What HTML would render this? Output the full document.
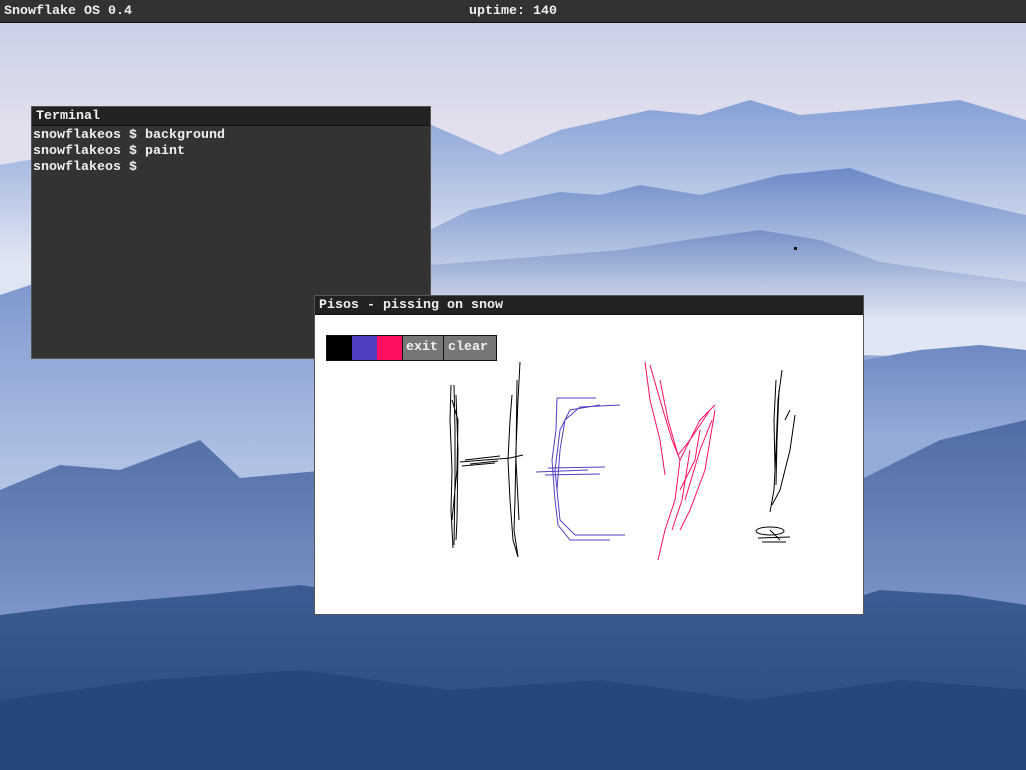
<!DOCTYPE html>
<html><head><meta charset="utf-8"><style>
html,body{margin:0;padding:0;width:1026px;height:770px;overflow:hidden;background:#cdd3e6}
*{box-sizing:border-box}
.mono{font-family:"Liberation Mono","DejaVu Sans Mono",monospace;font-size:13.33px;color:#f0f0f0;white-space:pre;font-weight:bold}
#bg{position:absolute;left:0;top:0}
#bar{position:absolute;left:0;top:0;width:1026px;height:23px;background:#323232;border-bottom:1px solid #111}
#bar .l{position:absolute;left:4px;top:4px}
#bar .c{position:absolute;left:469px;top:4px}
.win{position:absolute;border:1px solid #555}
.title{position:absolute;left:0;top:0;right:0;height:19px;background:#222;border-bottom:1px solid #111}
.title span{position:absolute;left:4px;top:2px}
</style></head><body>
<svg id="bg" width="1026" height="770" viewBox="0 0 1026 770">
<defs>
<linearGradient id="sky" gradientUnits="userSpaceOnUse" x1="0" y1="20" x2="0" y2="300"><stop offset="0" stop-color="#c9d0e6"/><stop offset="0.4" stop-color="#e2e0ee"/><stop offset="1" stop-color="#dfe3f1"/></linearGradient>
<linearGradient id="m1" gradientUnits="userSpaceOnUse" x1="0" y1="100" x2="0" y2="260"><stop offset="0" stop-color="#86a0d6"/><stop offset="1" stop-color="#e0e5f3"/></linearGradient>
<linearGradient id="m2" gradientUnits="userSpaceOnUse" x1="0" y1="170" x2="0" y2="300"><stop offset="0" stop-color="#6f8cc8"/><stop offset="1" stop-color="#dce3f2"/></linearGradient>
<linearGradient id="m2b" gradientUnits="userSpaceOnUse" x1="0" y1="230" x2="0" y2="320"><stop offset="0" stop-color="#7890c8"/><stop offset="1" stop-color="#e0e6f3"/></linearGradient>
<linearGradient id="m3" gradientUnits="userSpaceOnUse" x1="0" y1="285" x2="0" y2="480"><stop offset="0" stop-color="#8098ce"/><stop offset="1" stop-color="#b4c4e6"/></linearGradient>
<linearGradient id="m3r" gradientUnits="userSpaceOnUse" x1="0" y1="345" x2="0" y2="440"><stop offset="0" stop-color="#7088c2"/><stop offset="1" stop-color="#96acd8"/></linearGradient>
<linearGradient id="m4" gradientUnits="userSpaceOnUse" x1="0" y1="420" x2="0" y2="620"><stop offset="0" stop-color="#4f6ca4"/><stop offset="1" stop-color="#7e96c8"/></linearGradient>
<linearGradient id="m5" gradientUnits="userSpaceOnUse" x1="0" y1="590" x2="0" y2="770"><stop offset="0" stop-color="#3a5c92"/><stop offset="1" stop-color="#284878"/></linearGradient>
</defs>
<rect width="1026" height="770" fill="url(#sky)"/>
<path d="M0 165 L40 158 L120 150 L300 140 L420 120 L500 155 L560 130 L650 110 L700 115 L750 100 L800 115 L860 110 L960 100 L1026 120 L1026 770 L0 770Z" fill="url(#m1)"/>
<path d="M430 230 L470 210 L560 192 L600 195 L640 185 L700 195 L740 185 L780 175 L850 168 L900 185 L960 200 L1026 215 L1026 770 L430 770Z" fill="url(#m2)"/>
<path d="M430 265 L520 258 L620 250 L700 238 L760 230 L820 240 L880 262 L950 272 L1026 282 L1026 770 L430 770Z" fill="url(#m2b)"/>
<path d="M0 295 L30 285 L80 292 L150 300 L250 310 L350 330 L500 345 L700 350 L860 355 L1026 360 L1026 770 L0 770Z" fill="url(#m3)"/>
<path d="M864 360 L920 350 L980 345 L1026 350 L1026 770 L864 770Z" fill="url(#m3r)"/>
<path d="M0 490 L60 465 L120 470 L200 440 L240 478 L330 470 L420 470 L520 480 L700 490 L860 480 L940 440 L1026 420 L1026 770 L0 770Z" fill="url(#m4)"/>
<path d="M0 615 L80 605 L200 595 L300 585 L400 600 L500 610 L600 615 L700 605 L800 615 L880 590 L960 595 L1026 605 L1026 770 L0 770Z" fill="url(#m5)"/>
<path d="M0 700 L150 680 L300 670 L450 690 L600 680 L750 700 L900 680 L1026 690 L1026 770 L0 770Z" fill="#26477a"/>
<rect x="794" y="247" width="3" height="3" fill="#111"/>
</svg>
<div id="bar"><span class="mono l">Snowflake OS 0.4</span><span class="mono c">uptime: 140</span></div>

<div class="win" style="left:31px;top:106px;width:400px;height:253px;background:#333">
<div class="title"><span class="mono">Terminal</span></div>
<div class="mono" style="position:absolute;left:1px;top:21px;line-height:16px">snowflakeos $ background
snowflakeos $ paint
snowflakeos $</div>
</div>

<div class="win" style="left:314px;top:295px;width:550px;height:320px;background:#fff">
<div class="title"><span class="mono">Pisos - pissing on snow</span></div>
<div style="position:absolute;left:11px;top:39px;width:171px;height:26px;border:1px solid #111;background:#111">
<div style="position:absolute;left:0;top:0;width:25px;height:24px;background:#000"></div>
<div style="position:absolute;left:25px;top:0;width:25px;height:24px;background:#5040c0"></div>
<div style="position:absolute;left:50px;top:0;width:25px;height:24px;background:#ff1060"></div>
<div class="mono" style="position:absolute;left:76px;top:0;width:40px;height:24px;background:#777;padding:4px 0 0 3px">exit</div>
<div class="mono" style="position:absolute;left:117px;top:0;width:52px;height:24px;background:#777;padding:4px 0 0 4px">clear</div>
</div>
</div>

<svg style="position:absolute;left:0;top:0" width="1026" height="770" fill="none" stroke-width="1">
<g stroke="#000">
<path d="M451 385 L450 420 L452 470 L451 510 L453 548 M454 385 L455 430 L455 480 L454 545 M456 395 L458 450 L457 520 L456 540 M452 400 L458 420 L457 470 L452 520"/>
<path d="M520 362 L518 400 L516 450 L515 500 L514 530 L518 557 L513 540 L510 500 L508 460 L510 420 L512 395 M517 380 L516 460 L519 520"/>
<path d="M460 462 L485 460 L510 458 L523 455 M462 466 L495 463 M465 460 L500 456 M470 464 L498 461"/>
</g>
<g stroke="#5040c0">
<path d="M557 398 L596 398 M557 398 L556 430 L552 460 L555 500 L558 525 L570 540 L610 540 M600 405 L570 410 L560 430 L555 470 L560 520 L575 535 L625 535 M536 472 L588 470 M548 468 L605 467 M545 475 L600 474 M620 405 L580 407 L565 420 L560 450 L557 490"/>
</g>
<g stroke="#ff1060">
<path d="M645 362 L650 400 L660 440 L665 475 M650 365 L660 400 L672 440 L680 460 L700 420 L715 405 M660 380 L668 420 L678 455 L690 440 L710 410 M680 460 L675 500 L665 530 L658 560 M690 450 L682 500 L672 530 M715 410 L705 470 L690 510 L680 530 M712 420 L700 450 L685 500 M700 430 L695 460 L680 490"/>
</g>
<g stroke="#000">
<path d="M782 370 L778 400 L776 450 L774 490 L770 512 M776 380 L774 420 L775 470 M779 390 L777 440 L776 485 M785 420 L790 410 M795 415 L790 450 L780 490 L772 505"/>
<ellipse cx="770" cy="531" rx="14" ry="4"/>
<path d="M758 538 L790 537 M762 542 L786 542 M770 530 L780 540"/>
</g>
</svg>
</body></html>
